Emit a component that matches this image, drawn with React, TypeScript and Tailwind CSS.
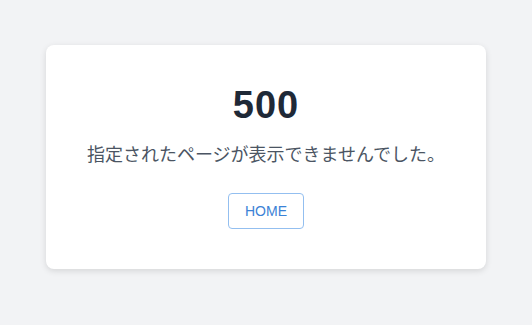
import React from 'react';

export default function App() {
  return (
    <div className="min-h-screen bg-[#f2f3f5] flex items-start justify-center pt-[45px] font-['Liberation_Sans','Noto_Sans_CJK_JP',sans-serif]">
      {/* Error card */}
      <div className="w-[440px] h-[224px] bg-white rounded-lg shadow-[0_2px_6px_rgba(0,0,0,0.12)] flex flex-col items-center pt-[38px]">
        <h1 className="text-[38px] leading-[44px] font-bold tracking-[1px] text-[#1f2937]">500</h1>
        <p className="mt-[14px] text-[18px] leading-6 text-[#4b5563] font-['Noto_Sans_CJK_JP',sans-serif]">
          指定されたページが表示できませんでした。
        </p>
        <button className="mt-[28px] w-[76px] h-[36px] border border-[#93bff0] rounded text-[14px] text-[#3b82d6] bg-white">
          HOME
        </button>
      </div>
    </div>
  );
}
